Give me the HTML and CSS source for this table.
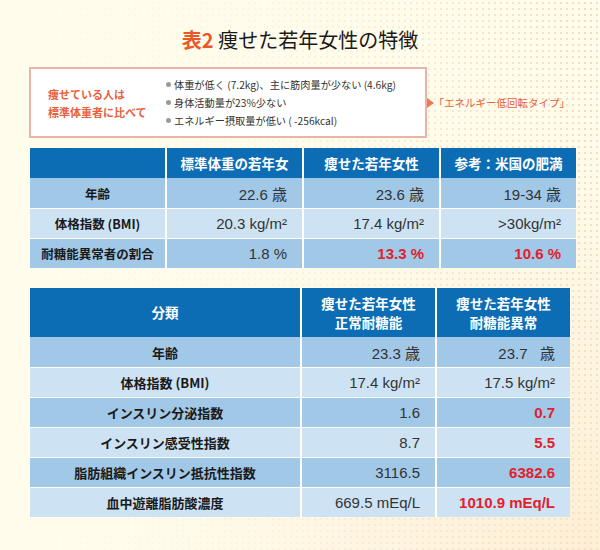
FILE: index.html
```html
<!DOCTYPE html>
<html lang="ja">
<head>
<meta charset="utf-8">
<link rel="stylesheet" href="styles.css">
</head>
<body>
<div class="page">
  <h1 class="title"><span class="title-num">表2</span> 痩せた若年女性の特徴</h1>

  <div class="summary">
    <div class="box">
      <div class="box-lead">痩せている人は<br>標準体重者に比べて</div>
      <ul class="box-list">
        <li>体重が低く (7.2kg)、主に筋肉量が少ない (4.6kg)</li>
        <li>身体活動量が23%少ない</li>
        <li>エネルギー摂取量が低い ( -256kcal)</li>
      </ul>
    </div>
    <div class="result"><span class="arrow"></span><span class="result-text">「エネルギー低回転タイプ」</span></div>
  </div>

  <table class="data t1">
    <thead>
      <tr><th></th><th>標準体重の若年女</th><th>痩せた若年女性</th><th>参考：米国の肥満</th></tr>
    </thead>
    <tbody>
      <tr class="dark"><td class="label">年齢</td><td>22.6 歳</td><td>23.6 歳</td><td>19-34 歳</td></tr>
      <tr class="light"><td class="label">体格指数 (BMI)</td><td>20.3 kg/m²</td><td>17.4 kg/m²</td><td>&gt;30kg/m²</td></tr>
      <tr class="dark"><td class="label">耐糖能異常者の割合</td><td>1.8 %</td><td class="hl">13.3 %</td><td class="hl">10.6 %</td></tr>
    </tbody>
  </table>

  <table class="data t2">
    <thead>
      <tr><th>分類</th><th>痩せた若年女性<br>正常耐糖能</th><th>痩せた若年女性<br>耐糖能異常</th></tr>
    </thead>
    <tbody>
      <tr class="dark"><td class="label">年齢</td><td>23.3 歳</td><td>23.7&nbsp;&nbsp;&nbsp;歳</td></tr>
      <tr class="light"><td class="label">体格指数 (BMI)</td><td>17.4 kg/m²</td><td>17.5 kg/m²</td></tr>
      <tr class="dark"><td class="label">インスリン分泌指数</td><td>1.6</td><td class="hl">0.7</td></tr>
      <tr class="light"><td class="label">インスリン感受性指数</td><td>8.7</td><td class="hl">5.5</td></tr>
      <tr class="dark"><td class="label">脂肪組織インスリン抵抗性指数</td><td>3116.5</td><td class="hl">6382.6</td></tr>
      <tr class="light"><td class="label">血中遊離脂肪酸濃度</td><td>669.5 mEq/L</td><td class="hl">1010.9 mEq/L</td></tr>
    </tbody>
  </table>
</div>
</body>
</html>
```

FILE: styles.css
```css
html, body {
  margin: 0;
  padding: 0;
}

body {
  width: 600px;
  height: 550px;
  overflow: hidden;
  font-family: "Noto Sans CJK JP", "Noto Sans", sans-serif;
  color: #222;
  background-color: #fffcec;
  background-image:
    radial-gradient(ellipse at 100% 100%, rgba(252, 228, 196, 0.55) 0%, rgba(252, 228, 196, 0) 55%),
    linear-gradient(to right, #fffcec 0%, rgba(255, 252, 236, 0.8) 45%, rgba(255, 252, 236, 0.05) 100%),
    radial-gradient(circle, rgba(236, 196, 150, 0.6) 0.9px, rgba(236, 196, 150, 0) 1.4px);
  background-size: 100% 100%, 100% 100%, 6px 6px;
}

.page {
  padding: 26px 30px 0 30px;
}

.title {
  margin: 0;
  text-align: center;
  font-size: 20px;
  line-height: 28px;
  font-weight: 400;
  color: #1a1a1a;
}

.title-num {
  color: #e8582a;
  font-weight: 700;
}

.summary {
  margin-top: 13px;
  margin-left: -1px;
  display: flex;
  align-items: center;
}

.box {
  box-sizing: border-box;
  width: 406px;
  height: 71px;
  border: 2px solid #eab5a5;
  background: #ffffff;
  display: flex;
  align-items: center;
  padding-left: 17px;
}

.box-lead {
  width: 118px;
  flex: none;
  color: #e8603c;
  font-size: 11px;
  font-weight: 700;
  line-height: 18px;
  padding-top: 1px;
}

.box-list {
  list-style: none;
  margin: 0;
  padding: 0;
  font-size: 10.2px;
  line-height: 18px;
  color: #333;
}

.box-list li {
  display: flex;
  align-items: center;
  white-space: pre;
}

.box-list li::before {
  content: "";
  width: 5px;
  height: 5px;
  border-radius: 50%;
  background: #9a9a9a;
  margin-right: 3px;
  flex: none;
}

.result {
  display: flex;
  align-items: center;
}

.arrow {
  width: 0;
  height: 0;
  border-left: 7px solid #ef7a52;
  border-top: 5px solid transparent;
  border-bottom: 5px solid transparent;
}

.result-text {
  font-size: 10.5px;
  color: #e8603c;
  white-space: nowrap;
}

.data {
  width: 540px;
  table-layout: fixed;
  border-collapse: separate;
  border-spacing: 0;
}

.t1 {
  margin-top: 10px;
}

.t2 {
  margin-top: 20px;
}

.data th {
  background: #0c6db5;
  color: #ffffff;
  font-size: 13.5px;
  font-weight: 700;
  text-align: center;
  padding: 0;
  line-height: 19px;
}

.t1 thead tr {
  height: 30px;
}

.t2 thead tr {
  height: 49px;
}

.data tbody tr {
  height: 30px;
}

.data th + th,
.data td + td {
  border-left: 2px solid #ffffff;
}

.data tbody td {
  border-top: 1px solid #ffffff;
  padding: 0 15px 0 0;
  text-align: right;
  font-family: "Liberation Sans", "Noto Sans CJK JP", sans-serif;
  font-size: 15px;
  color: #333;
  white-space: nowrap;
}

.data tbody tr:first-child td {
  border-top: none;
}

.data tr.dark td {
  background: #a1c8e7;
}

.data tr.light td {
  background: #cde3f4;
}

.data tbody td.label {
  text-align: center;
  padding: 0;
  font-family: "Noto Sans CJK JP", sans-serif;
  font-size: 12.5px;
  font-weight: 700;
  color: #1a1a1a;
}

.t2 tbody td.label {
  font-size: 13px;
}

.data tbody td.hl {
  color: #e3202d;
  font-weight: 700;
}

.t1 th {
  width: 135px;
}

.t2 th:first-child {
  width: 270px;
}
```
